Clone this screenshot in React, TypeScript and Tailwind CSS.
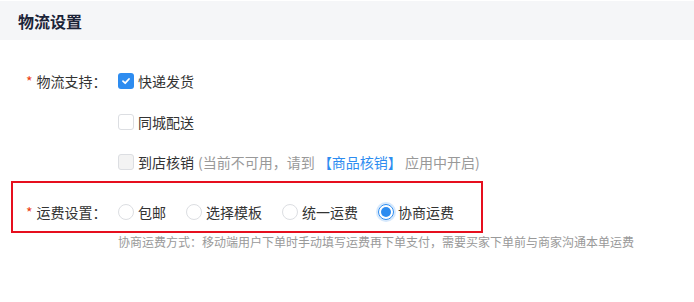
import React from 'react';

const font = { fontFamily: '"Noto Sans CJK SC", "Noto Sans", sans-serif' };

function Checkbox({ checked, disabled }: { checked?: boolean; disabled?: boolean }) {
  if (checked) {
    return (
      <span className="w-4 h-4 rounded-[3px] bg-[#2d8cf0] flex items-center justify-center shrink-0">
        <svg width="10" height="10" viewBox="0 0 10 10">
          <path d="M2 5.2 L4.2 7.2 L8 3" fill="none" stroke="#fff" strokeWidth="1.8" strokeLinecap="round" strokeLinejoin="round" />
        </svg>
      </span>
    );
  }
  return (
    <span
      className={`w-4 h-4 rounded-[3px] border shrink-0 ${disabled ? 'bg-[#f3f3f3] border-[#dcdee2]' : 'bg-white border-[#dcdee2]'}`}
    />
  );
}

function Radio({ checked, label }: { checked?: boolean; label: string }) {
  return (
    <label className="flex items-center gap-1 text-[14px] text-[#333]">
      {checked ? (
        <span className="w-4 h-4 rounded-full border border-[#2d8cf0] flex items-center justify-center shadow-[0_0_0_2px_rgba(45,140,240,0.2)]">
          <span className="w-[10px] h-[10px] rounded-full bg-[#2d8cf0]" />
        </span>
      ) : (
        <span className="w-4 h-4 rounded-full border border-[#dcdee2] bg-white" />
      )}
      <span>{label}</span>
    </label>
  );
}

export default function App() {
  return (
    <div className="w-[694px] h-[302px] bg-white text-[#333]" style={font}>
      <div className="mt-[1px] h-[39px] bg-[#f5f6f8] flex items-center pl-[18px]">
        <h2 className="text-[16px] font-bold text-[#1c2438]">物流设置</h2>
      </div>

      <div className="mt-[31px] flex flex-col gap-[21px]">
        <div className="flex items-center h-5 text-[14px]">
          <div className="w-[118px] pl-[26px] flex items-center">
            <span className="text-[#ed4014] mr-[4px]">*</span>
            <span>物流支持：</span>
          </div>
          <div className="flex items-center gap-1">
            <Checkbox checked />
            <span>快递发货</span>
          </div>
        </div>
        <div className="flex items-center h-5 text-[14px] pl-[118px]">
          <div className="flex items-center gap-1">
            <Checkbox />
            <span>同城配送</span>
          </div>
        </div>
        <div className="flex items-center h-5 text-[14px] pl-[118px] -mt-[1px]">
          <div className="flex items-center gap-1">
            <Checkbox disabled />
            <span>到店核销</span>
            <span className="text-[#999]">
              {' '}(当前不可用，请到 <span className="text-[#2d8cf0]">【商品核销】</span> 应用中开启)
            </span>
          </div>
        </div>
      </div>

      <div className="mt-[9px] ml-[11px] w-[472px] h-[52px] border-2 border-[#e60f1e] pt-[19px]">
        <div className="flex items-center h-5 text-[14px]">
          <div className="w-[105px] pl-[13px] flex items-center">
            <span className="text-[#ed4014] mr-[4px]">*</span>
            <span>运费设置：</span>
          </div>
          <div className="flex items-center gap-5">
            <Radio label="包邮" />
            <Radio label="选择模板" />
            <Radio label="统一运费" />
            <Radio checked label="协商运费" />
          </div>
        </div>
      </div>

      <p className="pl-[118px] mt-[1px] text-[12px] leading-[16px] text-[#999]">
        协商运费方式：移动端用户下单时手动填写运费再下单支付，需要买家下单前与商家沟通本单运费
      </p>
    </div>
  );
}
